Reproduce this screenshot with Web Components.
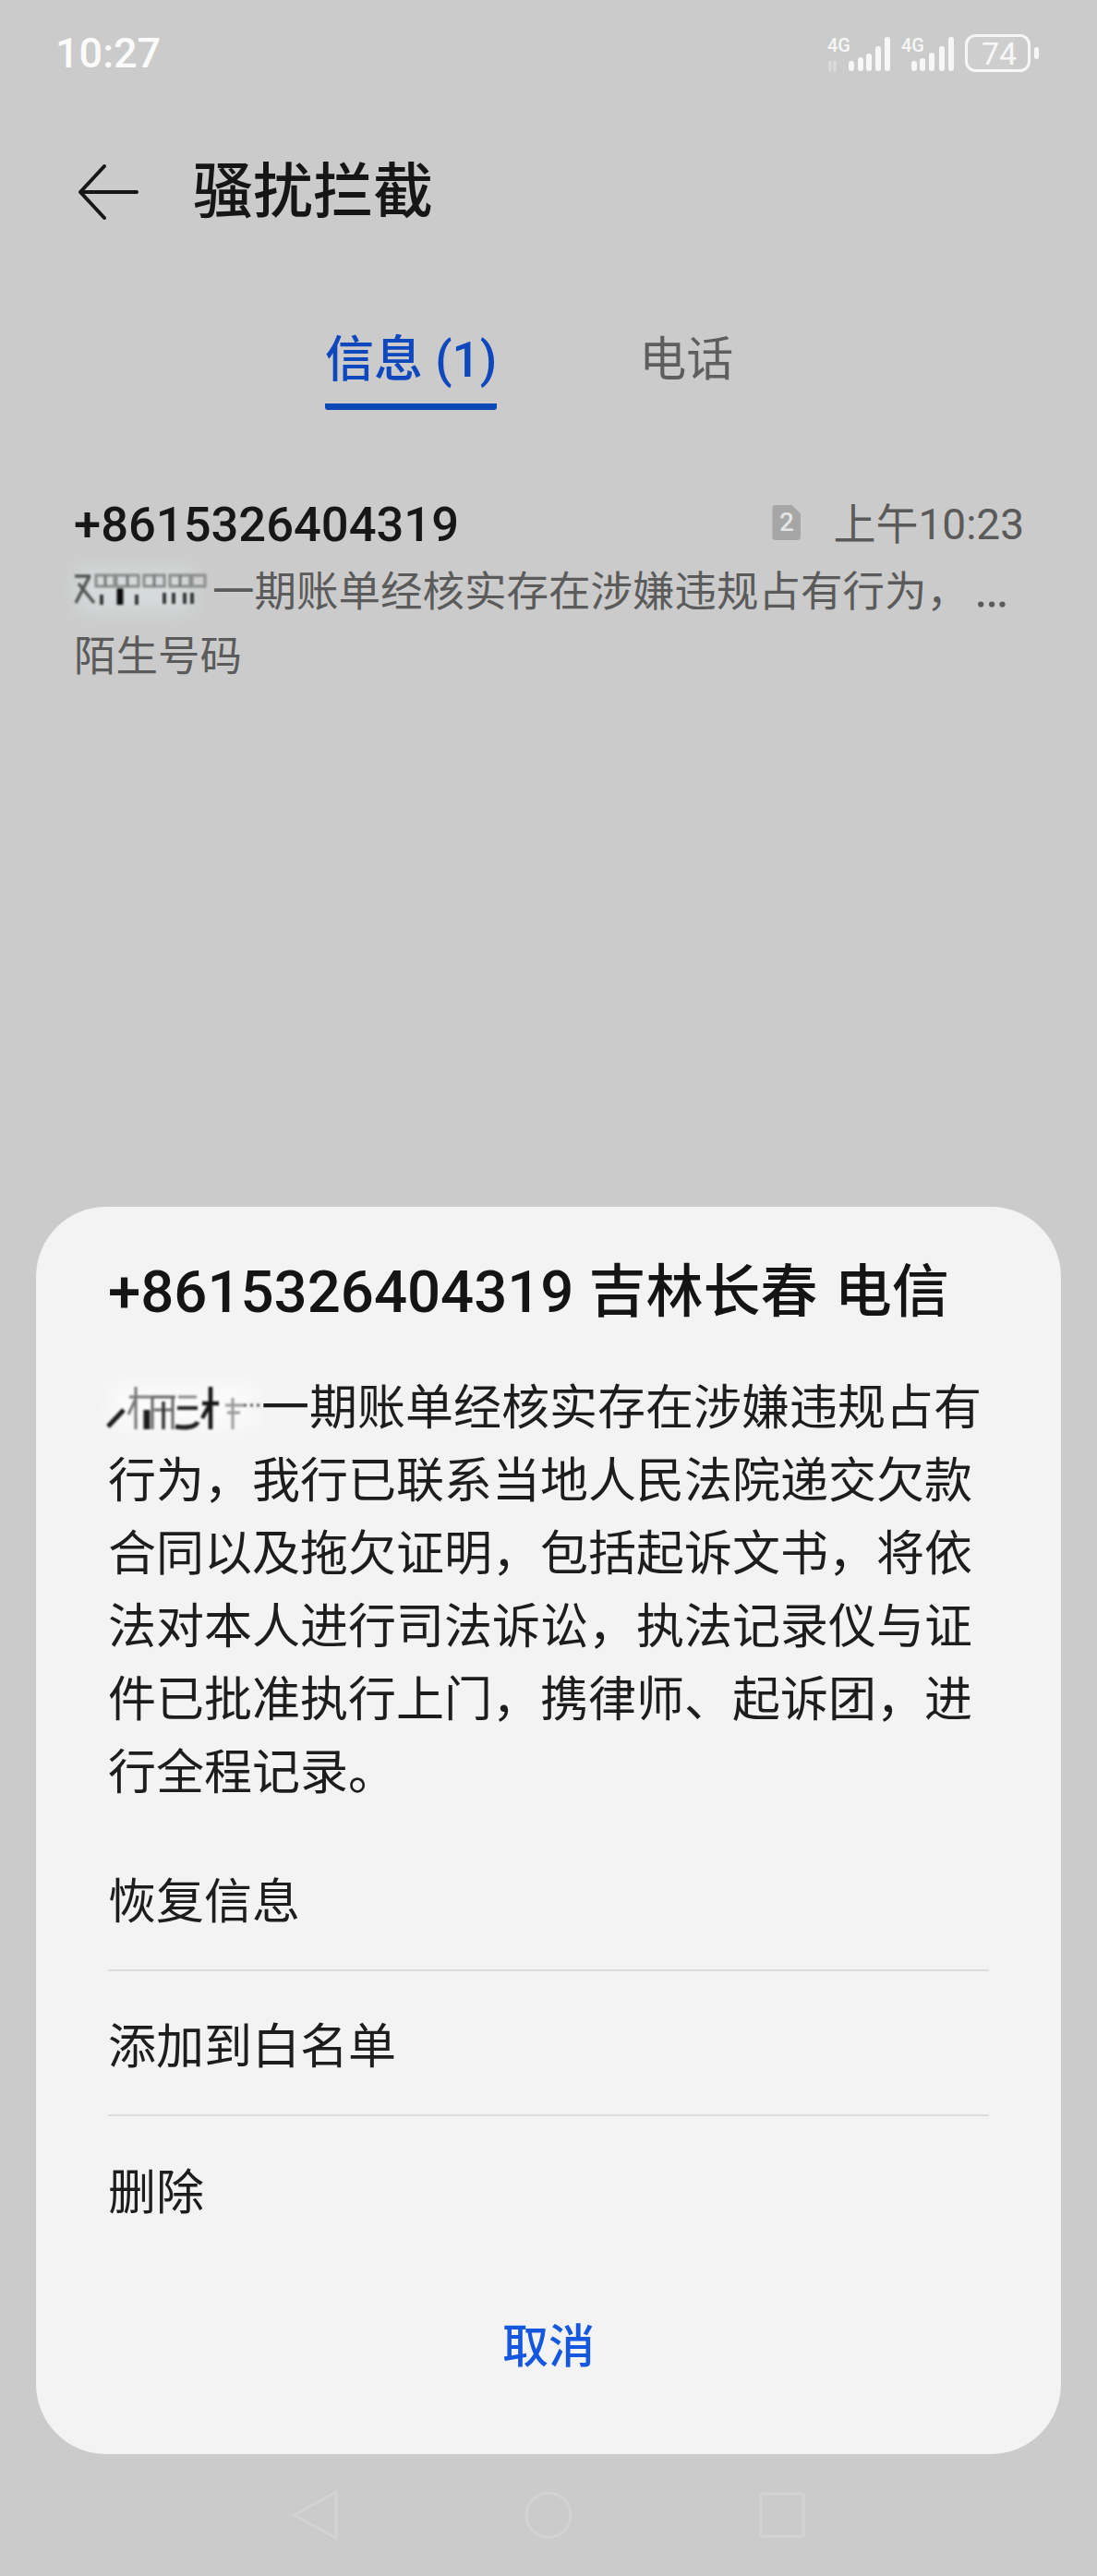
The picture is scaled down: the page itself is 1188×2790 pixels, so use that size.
<!DOCTYPE html>
<html lang="zh-CN">
<head>
<meta charset="utf-8">
<title>骚扰拦截</title>
<style>
    html, body { margin: 0; padding: 0; background: #cbcbcb; }
    body { font-family: Roboto, "Noto Sans CJK SC", sans-serif; }
</style>
</head>
<body>
<phone-screen>
    <status-bar time="10:27" battery="74"></status-bar>
    <app-bar title="骚扰拦截"></app-bar>
    <tab-strip>
        <tab-item active>信息 (1)</tab-item>
        <tab-item>电话</tab-item>
    </tab-strip>
    <message-row number="+8615326404319" time="上午10:23" sim="2" tag="陌生号码">一期账单经核实存在涉嫌违规占有行为，<span style="margin-left: 6px; font-size: 56px; line-height: 1;">…</span></message-row>
    <action-sheet number="+8615326404319" heading="吉林长春 电信" cancel="取消">
        <span slot="body">一期账单经核实存在涉嫌违规占有行为，我行已联系当地人民法院递交欠款合同以及拖欠证明，包括起诉文书，将依法对本人进行司法诉讼，执法记录仪与证件已批准执行上门，携律师、起诉团，进行全程记录。</span>
        <sheet-action>恢复信息</sheet-action>
        <sheet-action>添加到白名单</sheet-action>
        <sheet-action last>删除</sheet-action>
    </action-sheet>
    <nav-bar></nav-bar>
</phone-screen>

<script>
class PhoneScreen extends HTMLElement {
    constructor() {
        super();
        this.attachShadow({ mode: "open" });
        this.shadowRoot.innerHTML = `
            <style>
                :host {
                    display: flex;
                    flex-direction: column;
                    height: 2790px;
                    overflow: hidden;
                    background: #cbcbcb;
                }
            </style>
            <slot></slot>
        `;
    }
}

class StatusBar extends HTMLElement {
    constructor() {
        super();
        this.attachShadow({ mode: "open" });
        const time = this.getAttribute("time");
        const battery = this.getAttribute("battery");
        this.shadowRoot.innerHTML = `
            <style>
                :host {
                    display: flex;
                    align-items: center;
                    justify-content: space-between;
                    height: 116px;
                    padding: 0 62px 0 60px;
                    color: #fbfbfb;
                }
                .time { font-size: 45px; line-height: 116px; font-weight: 500; }
                svg { display: block; }
                text { font-family: Roboto, sans-serif; fill: #f7f7f7; }
            </style>
            <span class="time">${time}</span>
            <svg width="230" height="46" viewBox="0 0 230 46">
                <text x="0" y="21" font-size="20" font-weight="500">4G</text>
                <path d="M3 32v9M8 32v9" stroke="#dcdcdc" stroke-width="3" stroke-linecap="round"/>
                <g stroke="#f7f7f7" stroke-width="6" stroke-linecap="round" fill="none">
                    <path d="M26 34v5M36 30v9M45 26v13M55 18v21M65 8v31"/>
                    <path d="M94 34v5M103 31v8M113 25v14M124 18v21M134 8v31"/>
                </g>
                <text x="80" y="21" font-size="20" font-weight="500">4G</text>
                <rect x="150.500" y="3.500" width="68" height="38" rx="10" fill="none" stroke="#f7f7f7" stroke-width="3"/>
                <path d="M160 5h43v35h-43a8 8 0 0 1-8-8v-19a8 8 0 0 1 8-8z" fill="#fff" opacity=".07"/>
                <text x="167" y="35" font-size="34">${battery}</text>
                <rect x="224" y="16" width="5" height="13" rx="2.500" fill="#f7f7f7"/>
            </svg>
        `;
    }
}

class AppBar extends HTMLElement {
    constructor() {
        super();
        this.attachShadow({ mode: "open" });
        this.shadowRoot.innerHTML = `
            <style>
                :host {
                    display: flex;
                    align-items: center;
                    height: 184px;
                    padding-left: 84px;
                }
                svg { display: block; margin-right: 59px; }
                h1 {
                    margin: 0;
                    font-size: 65px;
                    line-height: 80px;
                    font-weight: 500;
                    color: #161616;
                }
            </style>
            <svg width="66" height="62" viewBox="0 0 66 62" fill="none" stroke="#161616" stroke-width="4" stroke-linecap="round" stroke-linejoin="round">
                <path d="M29 3 3 31l26 28M3 31h61"/>
            </svg>
            <h1>${this.getAttribute("title")}</h1>
        `;
    }
}

class TabStrip extends HTMLElement {
    constructor() {
        super();
        this.attachShadow({ mode: "open" });
        this.shadowRoot.innerHTML = `
            <style>
                :host {
                    display: flex;
                    gap: 154px;
                    padding-left: 352px;
                    height: 144px;
                }
            </style>
            <slot></slot>
        `;
    }
}

class TabItem extends HTMLElement {
    constructor() {
        super();
        this.attachShadow({ mode: "open" });
        this.shadowRoot.innerHTML = `
            <style>
                :host {
                    display: block;
                    box-sizing: border-box;
                    height: 144px;
                    padding-top: 60px;
                    font-size: 51px;
                    line-height: 60px;
                    color: #5e5e5e;
                    white-space: nowrap;
                }
                :host([active]) {
                    font-size: 53px;
                    color: #0f48bd;
                    font-weight: 500;
                    border-bottom: 7px solid #0c47b8;
                    border-radius: 0 0 3px 3px;
                }
            </style>
            <slot></slot>
        `;
    }
}

// smudged-out name in front of the message text, not readable in the original either
class NameSmudge extends HTMLElement {
    constructor() {
        super();
        this.attachShadow({ mode: "open" });
        const dark = this.hasAttribute("dark");
        const strokes = dark ? `
            <path d="M0 45 17 27" stroke="#1c1c1c" stroke-width="5"/>
            <path d="M23 13h24M30 2v46M30 15 22 32" stroke="#777" stroke-width="3"/>
            <path d="M47 13h26M48 13v35M70 13v35M50 27h20" stroke="#666" stroke-width="3"/>
            <path d="M60 18v30" stroke="#333" stroke-width="3.500"/>
            <path d="M42 27v21" stroke="#1a1a1a" stroke-width="7"/>
            <path d="M76 13h20" stroke="#888" stroke-width="3"/>
            <path d="M75 25h22" stroke="#222" stroke-width="4"/>
            <path d="M73 45c10 2 22 1 24-5" stroke="#222" stroke-width="5"/>
            <path d="M102 20h18M111 2v46M111 20l-9 16" stroke="#161616" stroke-width="4.500"/>
            <path d="M127 22h20M129 30h14M135 14v34" stroke="#999" stroke-width="3"/>
            <path d="M147 22h17" stroke="#555" stroke-width="3" stroke-dasharray="3 4"/>
        ` : `
            <path d="M1 6h17M17 6 2 35M5 14l17 21" stroke="#555" stroke-width="3.500"/>
            <path d="M24 5h20v12h-20zM46 5h24v12h-24zM76 5h22v12h-22zM104 5h22v12h-22zM128 5h14v12h-14z" stroke="#8c8c8c" stroke-width="3"/>
            <path d="M34 5v12M58 5v12M87 5v12M115 5v12" stroke="#777" stroke-width="3"/>
            <path d="M30 26v11M68 26v11M98 24v12M108 24v12M120 24v12M128 24v12" stroke="#3a3a3a" stroke-width="4"/>
            <path d="M50 19v18" stroke="#0f0f0f" stroke-width="7"/>
        `;
        const width = dark ? 166 : 134;
        const height = dark ? 50 : 46;
        this.shadowRoot.innerHTML = `
            <style>
                :host { display: inline-block; vertical-align: middle; width: ${width}px; height: ${height}px; }
                svg { display: block; overflow: visible; }
            </style>
            <svg width="${width}" height="${height}" viewBox="0 0 ${width} ${height}" fill="none" aria-hidden="true">
                <defs><filter id="b" x="-20%" y="-40%" width="140%" height="180%"><feGaussianBlur stdDeviation="0.900"/></filter>
                <filter id="halo" x="-30%" y="-60%" width="160%" height="220%"><feGaussianBlur stdDeviation="10"/></filter></defs>
                <rect x="4" y="-2" width="${width - 10}" height="${height}" fill="${dark ? "#fafafa" : "#d6dadb"}" filter="url(#halo)"/>
                <g filter="url(#b)">${strokes}</g>
            </svg>
        `;
    }
}

class MessageRow extends HTMLElement {
    constructor() {
        super();
        this.attachShadow({ mode: "open" });
        this.shadowRoot.innerHTML = `
            <style>
                :host {
                    display: block;
                    margin-top: 85px;
                    padding: 0 79px 0 80px;
                }
                .top { display: flex; align-items: center; height: 74px; }
                .number { flex: 1; font-size: 52.500px; font-weight: 500; color: #171717; margin-top: 3px; }
                .sim {
                    width: 31px;
                    height: 38px;
                    margin-right: 35px;
                    text-align: center;
                    font-size: 28px;
                    line-height: 38px;
                    font-weight: 500;
                    color: #e4e4e4;
                    background: #a6a6a6;
                    border-radius: 4px;
                    clip-path: polygon(0 0, 68% 0, 100% 26%, 100% 100%, 0 100%);
                }
                .time { font-size: 46px; color: #5a5a5a; margin-bottom: 5px; }
                .line {
                    height: 68px;
                    font-size: 45.500px;
                    line-height: 68px;
                    color: #5b5b5b;
                    white-space: nowrap;
                }
                .preview { margin-top: 5px; }
                .line + .line { height: 70px; line-height: 72px; }
                name-smudge { margin: -8px 16px 0 0; }
            </style>
            <div class="top">
                <span class="number">${this.getAttribute("number")}</span>
                <span class="sim">${this.getAttribute("sim")}</span>
                <span class="time">${this.getAttribute("time")}</span>
            </div>
            <div class="line preview"><name-smudge></name-smudge><slot></slot></div>
            <div class="line">${this.getAttribute("tag")}</div>
        `;
    }
}

class ActionSheet extends HTMLElement {
    constructor() {
        super();
        this.attachShadow({ mode: "open" });
        this.shadowRoot.innerHTML = `
            <style>
                :host {
                    display: block;
                    margin: auto 39px 0;
                    padding: 53px 78px 23px;
                    background: #f3f3f3;
                    border-radius: 76px;
                }
                h2 {
                    display: flex;
                    gap: 16px;
                    margin: 0 0 46px;
                    font-size: 62px;
                    word-spacing: 3px;
                    line-height: 80px;
                    font-weight: 500;
                    color: #141414;
                    white-space: nowrap;
                }
                .num { font-size: 63.500px; }
                .body {
                    font-size: 52px;
                    line-height: 79px;
                    color: #1d1d1d;
                }
                name-smudge { margin-top: -8px; }
                .actions { margin-top: 18px; }
                .cancel {
                    height: 186px;
                    text-align: center;
                    font-size: 50px;
                    line-height: 186px;
                    font-weight: 500;
                    color: #1557df;
                }
            </style>
            <h2><span class="num">${this.getAttribute("number")}</span><span>${this.getAttribute("heading")}</span></h2>
            <div class="body"><name-smudge dark></name-smudge><slot name="body"></slot></div>
            <div class="actions"><slot></slot></div>
            <div class="cancel">${this.getAttribute("cancel")}</div>
        `;
    }
}

class SheetAction extends HTMLElement {
    constructor() {
        super();
        this.attachShadow({ mode: "open" });
        this.shadowRoot.innerHTML = `
            <style>
                :host {
                    display: flex;
                    align-items: center;
                    box-sizing: border-box;
                    height: 157px;
                    font-size: 52px;
                    color: #1d1d1d;
                    border-bottom: 2px solid #dcdcdc;
                }
                :host([last]) { border-bottom: 0; }
            </style>
            <slot></slot>
        `;
    }
}

class NavBar extends HTMLElement {
    constructor() {
        super();
        this.attachShadow({ mode: "open" });
        this.shadowRoot.innerHTML = `
            <style>
                :host {
                    display: flex;
                    justify-content: center;
                    height: 132px;
                    padding-top: 38px;
                    box-sizing: border-box;
                }
                svg { display: block; }
            </style>
            <svg width="560" height="56" viewBox="0 0 560 56" fill="none" stroke="#d3d3d3" stroke-width="3" stroke-linejoin="round">
                <path d="M50 3v50L5 28z"/>
                <circle cx="280" cy="28" r="24"/>
                <rect x="510" y="5" width="46" height="46"/>
            </svg>
        `;
    }
}

customElements.define("phone-screen", PhoneScreen);
customElements.define("status-bar", StatusBar);
customElements.define("app-bar", AppBar);
customElements.define("tab-strip", TabStrip);
customElements.define("tab-item", TabItem);
customElements.define("name-smudge", NameSmudge);
customElements.define("message-row", MessageRow);
customElements.define("action-sheet", ActionSheet);
customElements.define("sheet-action", SheetAction);
customElements.define("nav-bar", NavBar);
</script>
</body>
</html>
